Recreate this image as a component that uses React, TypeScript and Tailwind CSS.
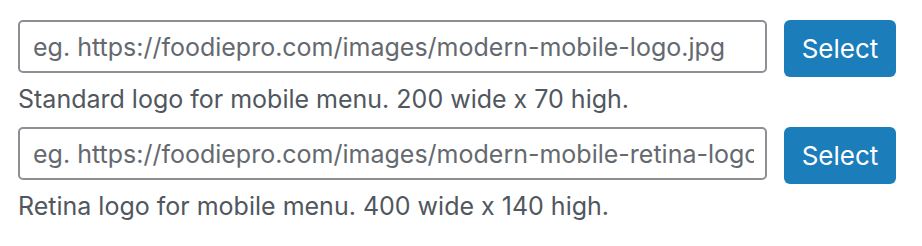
import React from "react";

function Row({ placeholder, desc, mt }: { placeholder: string; desc: string; mt: string }) {
  return (
    <div className={`flex items-start gap-[17px] ${mt}`}>
      <div className="w-[749px] flex flex-col">
        <input
          readOnly
          placeholder={placeholder}
          className="h-[53px] w-full rounded-[5px] border-2 border-[#8c8f94] bg-white pl-[13px] pr-[11px] text-[25px] text-[#2c3338] outline-none placeholder:text-[#646970]"
          style={{ fontFamily: "Inter, 'Noto Sans', sans-serif" }}
        />
        <p
          className="mt-[10px] text-[25px] leading-[32px] text-[#50575e]"
          style={{ fontFamily: "Inter, 'Noto Sans', sans-serif" }}
        >
          {desc}
        </p>
      </div>
      <button
        className="h-[57px] w-[112px] rounded-[6px] bg-[#1b7dba] text-[26px] text-white"
        style={{ fontFamily: "Inter, 'Noto Sans', sans-serif" }}
      >
        Select
      </button>
    </div>
  );
}

export default function App() {
  return (
    <div className="w-[922px] h-[246px] bg-white pl-[18px] pt-[20px]">
      <Row
        mt=""
        placeholder="eg. https://foodiepro.com/images/modern-mobile-logo.jpg"
        desc="Standard logo for mobile menu. 200 wide x 70 high."
      />
      <Row
        mt="mt-[12px]"
        placeholder="eg. https://foodiepro.com/images/modern-mobile-retina-logo.jpg"
        desc="Retina logo for mobile menu. 400 wide x 140 high."
      />
    </div>
  );
}
